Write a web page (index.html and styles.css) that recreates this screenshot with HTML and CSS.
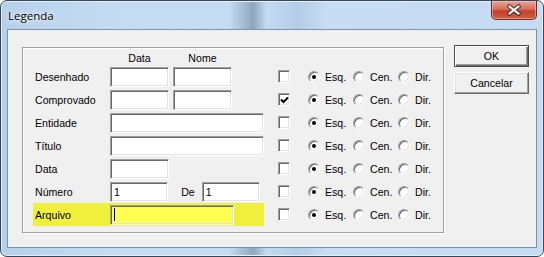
FILE: index.html
```html
<!doctype html>
<html lang="pt">
  <head>
    <meta charset="UTF-8" />
    <title>Legenda</title>
    <link rel="stylesheet" href="styles.css">
  </head>
  <body>
    <div class="window">
      <!-- Title bar -->
      <div class="titlebar">
        <span class="title">Legenda</span>
        <div class="close-btn">
          <svg width="16" height="12" viewBox="0 0 16 12">
            <path d="M3.5 2.5 L12.5 9.5 M12.5 2.5 L3.5 9.5" stroke="#3a2a2a" stroke-width="4" stroke-linecap="square" fill="none" />
            <path d="M3.5 2.5 L12.5 9.5 M12.5 2.5 L3.5 9.5" stroke="#f4f6fb" stroke-width="2.2" stroke-linecap="square" fill="none" />
          </svg>
        </div>
      </div>

      <!-- Client area -->
      <div class="client">
        <div class="group">
          <div class="header-row">
            <span class="head-spacer"></span>
            <span class="head">Data</span>
            <span class="head">Nome</span>
          </div>

          <div class="row">
            <div class="cells">
              <span class="label">Desenhado</span>
              <div class="field">
                <span class="input small"></span>
                <span class="input small"></span>
              </div>
            </div>
            <span class="check"></span>
            <div class="align">
              <span class="opt"><span class="radio on"></span>Esq.</span>
              <span class="opt"><span class="radio"></span>Cen.</span>
              <span class="opt"><span class="radio"></span>Dir.</span>
            </div>
          </div>

          <div class="row">
            <div class="cells">
              <span class="label">Comprovado</span>
              <div class="field">
                <span class="input small"></span>
                <span class="input small"></span>
              </div>
            </div>
            <span class="check checked">
              <svg width="9" height="9" viewBox="0 0 9 9">
                <polyline points="1,3.5 3.5,6 8,1.5" stroke="#000" stroke-width="2" fill="none" />
              </svg>
            </span>
            <div class="align">
              <span class="opt"><span class="radio on"></span>Esq.</span>
              <span class="opt"><span class="radio"></span>Cen.</span>
              <span class="opt"><span class="radio"></span>Dir.</span>
            </div>
          </div>

          <div class="row">
            <div class="cells">
              <span class="label">Entidade</span>
              <div class="field">
                <span class="input wide"></span>
              </div>
            </div>
            <span class="check"></span>
            <div class="align">
              <span class="opt"><span class="radio on"></span>Esq.</span>
              <span class="opt"><span class="radio"></span>Cen.</span>
              <span class="opt"><span class="radio"></span>Dir.</span>
            </div>
          </div>

          <div class="row">
            <div class="cells">
              <span class="label">Título</span>
              <div class="field">
                <span class="input wide"></span>
              </div>
            </div>
            <span class="check"></span>
            <div class="align">
              <span class="opt"><span class="radio on"></span>Esq.</span>
              <span class="opt"><span class="radio"></span>Cen.</span>
              <span class="opt"><span class="radio"></span>Dir.</span>
            </div>
          </div>

          <div class="row">
            <div class="cells">
              <span class="label">Data</span>
              <div class="field">
                <span class="input small"></span>
              </div>
            </div>
            <span class="check"></span>
            <div class="align">
              <span class="opt"><span class="radio on"></span>Esq.</span>
              <span class="opt"><span class="radio"></span>Cen.</span>
              <span class="opt"><span class="radio"></span>Dir.</span>
            </div>
          </div>

          <div class="row">
            <div class="cells">
              <span class="label">Número</span>
              <div class="field">
                <span class="input small">1</span>
                <span class="de">De</span>
                <span class="input small">1</span>
              </div>
            </div>
            <span class="check"></span>
            <div class="align">
              <span class="opt"><span class="radio on"></span>Esq.</span>
              <span class="opt"><span class="radio"></span>Cen.</span>
              <span class="opt"><span class="radio"></span>Dir.</span>
            </div>
          </div>

          <div class="row">
            <div class="cells focus">
              <span class="label">Arquivo</span>
              <div class="field">
                <span class="input file"><span class="caret"></span></span>
              </div>
            </div>
            <span class="check"></span>
            <div class="align">
              <span class="opt"><span class="radio on"></span>Esq.</span>
              <span class="opt"><span class="radio"></span>Cen.</span>
              <span class="opt"><span class="radio"></span>Dir.</span>
            </div>
          </div>
        </div>

        <!-- Buttons -->
        <div class="buttons">
          <div class="btn default">OK</div>
          <div class="btn">Cancelar</div>
        </div>
      </div>
    </div>
  </body>
</html>
```

FILE: styles.css
```css
* {
  margin: 0;
  padding: 0;
  box-sizing: border-box;
}

body {
  font-family: "Liberation Sans", Arial, sans-serif;
  font-size: 10.6px;
  color: #000;
  background: #fff;
  width: 544px;
  height: 257px;
  overflow: hidden;
}

.window {
  width: 544px;
  height: 257px;
  border: 1px solid #34475c;
  border-radius: 7px;
  padding: 0 6px 8px;
  background: linear-gradient(to right, #b7d0ea 0%, #c4dbf3 20%, #c6dcf4 42%, #a3b9d2 45%, #8fa5bd 46.5%, #c3daf2 49%, #b4cce6 55%, #c8ddf4 60%, #c5dbf3 100%);
  box-shadow: inset 0 0 0 1px #e2eefb;
  display: flex;
  flex-direction: column;
}

.titlebar {
  height: 28px;
  display: flex;
  justify-content: space-between;
  align-items: flex-start;
}

.title {
  font-family: "Open Sans", "Liberation Sans", sans-serif;
  font-size: 11.5px;
  line-height: 16px;
  padding: 7px 0 0 1px;
  text-shadow: 0 0 6px #fff, 0 0 3px #fff;
}

.close-btn {
  width: 46px;
  height: 19px;
  border: 1px solid #6e2a22;
  border-top: none;
  border-radius: 0 0 5px 5px;
  background: linear-gradient(#e7a596 0%, #d7705c 45%, #c2402a 55%, #cf5c40 100%);
  box-shadow: inset 0 0 0 1px rgba(255, 210, 200, 0.5);
  display: flex;
  align-items: center;
  justify-content: center;
}

.client {
  flex: 1;
  border: 1px solid #7f93a8;
  background: #f0f0f0;
  padding: 15px 0 0 14px;
  display: flex;
  align-items: flex-start;
}

/* group box */
.group {
  width: 422px;
  margin-top: 2px;
  border: 1px solid #a0a0a0;
  box-shadow: inset 1px 1px #fff, 1px 1px #fff;
  padding: 0 0 6px 10px;
}

.header-row {
  height: 17px;
  padding-top: 3px;
  line-height: 14px;
  display: flex;
}

.head-spacer {
  width: 77px;
}

.head {
  width: 59px;
  margin-right: 4px;
  text-align: center;
}

.row {
  height: 23px;
  display: flex;
  align-items: center;
}

.cells {
  width: 231px;
  height: 23px;
  display: flex;
  align-items: center;
}

.cells.focus {
  background: #f0f03c;
}

.label {
  width: 77px;
  padding-left: 2px;
}

.field {
  width: 154px;
  display: flex;
  align-items: center;
}

.input {
  height: 20px;
  background: #fff;
  border: 1px solid;
  border-color: #a0a0a0 #fff #fff #a0a0a0;
  box-shadow: inset 1px 1px #696969, inset -1px -1px #e3e3e3;
  padding: 0 3px;
  line-height: 18px;
  display: flex;
  align-items: center;
}

.input.small {
  width: 59px;
  margin-right: 4px;
}

.input.wide {
  width: 154px;
}

.input.file {
  width: 124px;
  background: #ffff50;
}

.caret {
  width: 1px;
  height: 13px;
  background: #000;
}

.de {
  width: 30px;
  padding-left: 9px;
}

/* checkbox */
.check {
  width: 13px;
  height: 13px;
  margin-left: 14px;
  background: #fff;
  border: 1px solid;
  border-color: #a0a0a0 #fff #fff #a0a0a0;
  box-shadow: inset 1px 1px #696969, inset -1px -1px #e3e3e3;
  display: flex;
  align-items: center;
  justify-content: center;
}

.check svg {
  margin-top: 1px;
}

/* alignment radios */
.align {
  margin-left: 18px;
  display: flex;
}

.opt {
  width: 45px;
  display: flex;
  align-items: center;
}

.radio {
  width: 12px;
  height: 12px;
  margin-right: 5px;
  border-radius: 50%;
  background: #fff;
  border: 1px solid;
  border-color: #a0a0a0 #f8f8f8 #f8f8f8 #a0a0a0;
  box-shadow: inset 1px 1px #696969, inset -1px -1px #e3e3e3;
  position: relative;
}

.radio.on::after {
  content: "";
  position: absolute;
  left: 3px;
  top: 3px;
  width: 4px;
  height: 4px;
  border-radius: 50%;
  background: #000;
}

/* buttons */
.buttons {
  margin-left: 10px;
  display: flex;
  flex-direction: column;
  gap: 5px;
}

.btn {
  width: 75px;
  height: 22px;
  background: #f0f0f0;
  border: 1px solid;
  border-color: #fff #696969 #696969 #fff;
  box-shadow: inset -1px -1px #a0a0a0, inset 1px 1px #e3e3e3;
  display: flex;
  align-items: center;
  justify-content: center;
}

.btn.default {
  border: 1px solid #4a4a4a;
  box-shadow: inset 1px 1px #fff, inset -1px -1px #696969, inset -2px -2px #a0a0a0;
}
```
